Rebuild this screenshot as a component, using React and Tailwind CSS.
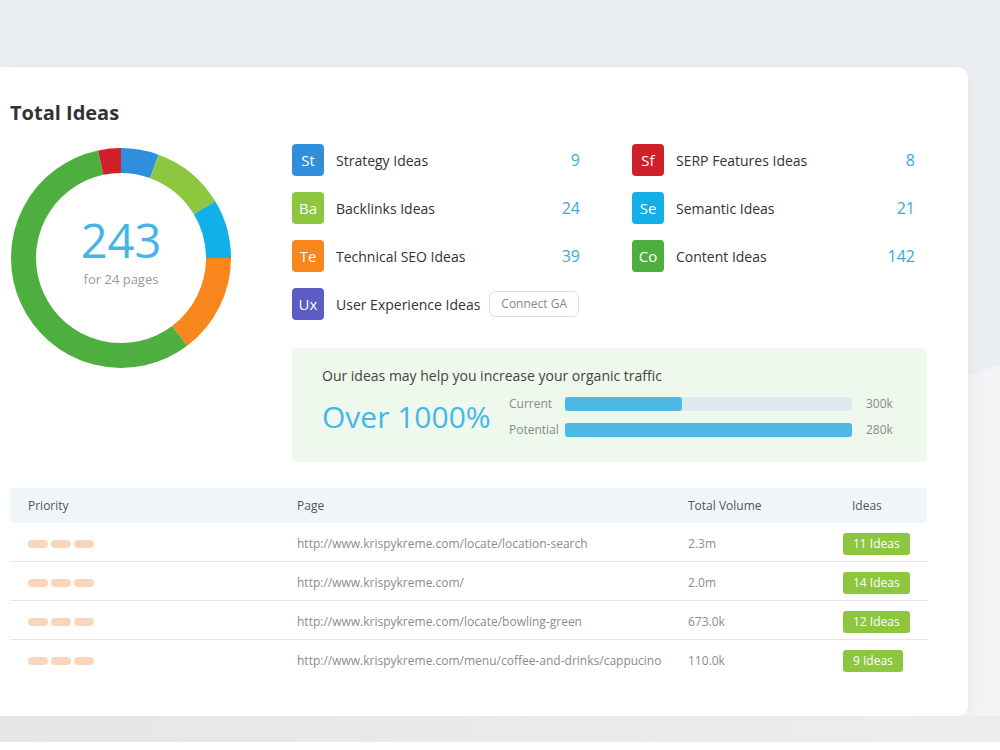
import React from "react";

const FONT = { fontFamily: '"Open Sans", "Noto Sans", sans-serif' };

const categories = [
  { code: "St", label: "Strategy Ideas", count: 9, bg: "bg-[#2f8fdd]" },
  { code: "Sf", label: "SERP Features Ideas", count: 8, bg: "bg-[#d0212b]" },
  { code: "Ba", label: "Backlinks Ideas", count: 24, bg: "bg-[#8dc63f]" },
  { code: "Se", label: "Semantic Ideas", count: 21, bg: "bg-[#12b0e8]" },
  { code: "Te", label: "Technical SEO Ideas", count: 39, bg: "bg-[#f7861c]" },
  { code: "Co", label: "Content Ideas", count: 142, bg: "bg-[#4caf3e]" },
];

// arcs in degrees, clockwise from 12 o'clock
const segments = [
  { from: 0, to: 20, color: "#2f8fdd" },
  { from: 20, to: 59, color: "#8dc63f" },
  { from: 59, to: 90, color: "#12b0e8" },
  { from: 90, to: 143, color: "#f7861c" },
  { from: 143, to: 348, color: "#4caf3e" },
  { from: 348, to: 360, color: "#d0212b" },
];

const rows = [
  { url: "http://www.krispykreme.com/locate/location-search", volume: "2.3m", ideas: "11 Ideas" },
  { url: "http://www.krispykreme.com/", volume: "2.0m", ideas: "14 Ideas" },
  { url: "http://www.krispykreme.com/locate/bowling-green", volume: "673.0k", ideas: "12 Ideas" },
  { url: "http://www.krispykreme.com/menu/coffee-and-drinks/cappucino", volume: "110.0k", ideas: "9 Ideas" },
];

const point = (c, r, deg) => {
  const a = (deg * Math.PI) / 180;
  return [c + r * Math.sin(a), c - r * Math.cos(a)];
};

const arcPath = (c, r, from, to) => {
  const [x1, y1] = point(c, r, from);
  const [x2, y2] = point(c, r, to - 0.01);
  const large = to - from > 180 ? 1 : 0;
  return `M ${x1} ${y1} A ${r} ${r} 0 ${large} 1 ${x2} ${y2}`;
};

const Donut = () => (
  <div className="relative w-[222px] h-[222px]">
    <svg width="222" height="222" viewBox="0 0 222 222">
      {segments.map((s) => (
        <path
          key={s.from}
          d={arcPath(111, 97.5, s.from, s.to)}
          stroke={s.color}
          strokeWidth="25"
          fill="none"
        />
      ))}
    </svg>
    <div className="absolute inset-0 flex flex-col items-center justify-center pb-[8px]">
      <span className="text-[47px] leading-[40px] font-medium text-[#43b5e6]">243</span>
      <span className="text-[13px] leading-[18px] text-[#9a9a9a] mt-[10px]">for 24 pages</span>
    </div>
  </div>
);

const IdeaRow = ({ code, label, count, bg, children }) => (
  <div className="flex items-center h-12 whitespace-nowrap">
    <div
      className={`w-8 h-8 shrink-0 rounded-[4px] ${bg} flex items-center justify-center text-white text-[15px]`}
    >
      {code}
    </div>
    <span className="ml-3 text-[14px] text-[#333]">{label}</span>
    {children}
    {count !== undefined && (
      <span className="ml-auto text-[16px] text-[#3aa9d8]">{count}</span>
    )}
  </div>
);

const TrafficBox = () => (
  <div className="mt-5 h-[114px] bg-[#eef8ec] rounded-[4px] pl-[30px] pr-[20px] pt-[17px]">
    <p className="text-[14px] text-[#444]">
      Our ideas may help you increase your organic traffic
    </p>
    <div className="flex items-center mt-[9px]">
      <span className="text-[30px] leading-none text-[#44b7e7] w-[187px]">
        Over 1000%
      </span>
      <div className="flex flex-col gap-[8px]">
        <div className="flex items-center">
          <span className="w-[56px] text-[12px] text-[#8a8a8a]">Current</span>
          <div className="w-[287px] h-[14px] rounded-[3px] bg-[#dfe9f0]">
            <div className="w-[117px] h-full rounded-[3px] bg-[#4db8e3]" />
          </div>
          <span className="ml-[14px] text-[12px] text-[#8a8a8a]">300k</span>
        </div>
        <div className="flex items-center">
          <span className="w-[56px] text-[12px] text-[#8a8a8a]">Potential</span>
          <div className="w-[287px] h-[14px] rounded-[3px] bg-[#4db8e3]" />
          <span className="ml-[14px] text-[12px] text-[#8a8a8a]">280k</span>
        </div>
      </div>
    </div>
  </div>
);

const PriorityPills = () => (
  <div className="flex gap-[3px]">
    <span className="w-5 h-2 rounded-full bg-[#f9d6bb]" />
    <span className="w-5 h-2 rounded-full bg-[#f9d6bb]" />
    <span className="w-5 h-2 rounded-full bg-[#f9d6bb]" />
  </div>
);

const PagesTable = () => (
  <div className="mt-[26px]">
    <div className="grid grid-cols-[269px_391px_155px_1fr] items-center h-[35px] bg-[#f0f5fa] rounded-[4px] pl-[18px] text-[12px] text-[#555]">
      <span>Priority</span>
      <span>Page</span>
      <span>Total Volume</span>
      <span className="pl-[9px]">Ideas</span>
    </div>
    {rows.map((r, i) => (
      <div
        key={r.url}
        className={`grid grid-cols-[269px_391px_155px_1fr] items-center h-[39px] pt-[3px] pl-[18px] text-[12px] text-[#8c8c8c] ${
          i < rows.length - 1 ? "border-b border-[#e6e6e6]" : ""
        }`}
      >
        <PriorityPills />
        <span className="whitespace-nowrap">{r.url}</span>
        <span>{r.volume}</span>
        <span>
          <span className="inline-block px-[10px] h-[22px] leading-[22px] rounded-[3px] bg-[#8dc63f] text-white">
            {r.ideas}
          </span>
        </span>
      </div>
    ))}
  </div>
);

export default function App() {
  return (
    <div className="w-[1000px] h-[750px] overflow-hidden bg-white" style={FONT}>
      <div className="h-[742px] flex flex-col bg-[linear-gradient(162deg,#eceff2_64.7%,#f3f4f6_64.7%)]">
        <div className="h-[67px]" />
        <div className="w-[968px] h-[649px] bg-white rounded-r-[10px] shadow-[0_4px_20px_rgba(0,0,0,0.05)] pl-[10px] pr-[41px] pt-[32px]">
          <h1 className="text-[20px] leading-7 font-bold text-[#333]">Total Ideas</h1>

          <div className="flex">
            <div className="w-[282px] pt-[20px]">
              <Donut />
            </div>
            <div className="flex-1 pt-[9px]">
              <div className="grid grid-cols-[288px_283px] gap-x-[52px]">
                {categories.map((c) => (
                  <IdeaRow key={c.code} {...c} />
                ))}
                <IdeaRow code="Ux" label="User Experience Ideas" bg="bg-[#5c5cc4]">
                  <button className="ml-[9px] h-[26px] px-[11px] rounded-[6px] border border-[#dcdcdc] text-[12px] text-[#888] bg-white">
                    Connect GA
                  </button>
                </IdeaRow>
              </div>
              <TrafficBox />
            </div>
          </div>

          <PagesTable />
        </div>
        <div className="flex-1 bg-[linear-gradient(to_right,#e5e6e8,#eceded)]" />
      </div>
    </div>
  );
}
